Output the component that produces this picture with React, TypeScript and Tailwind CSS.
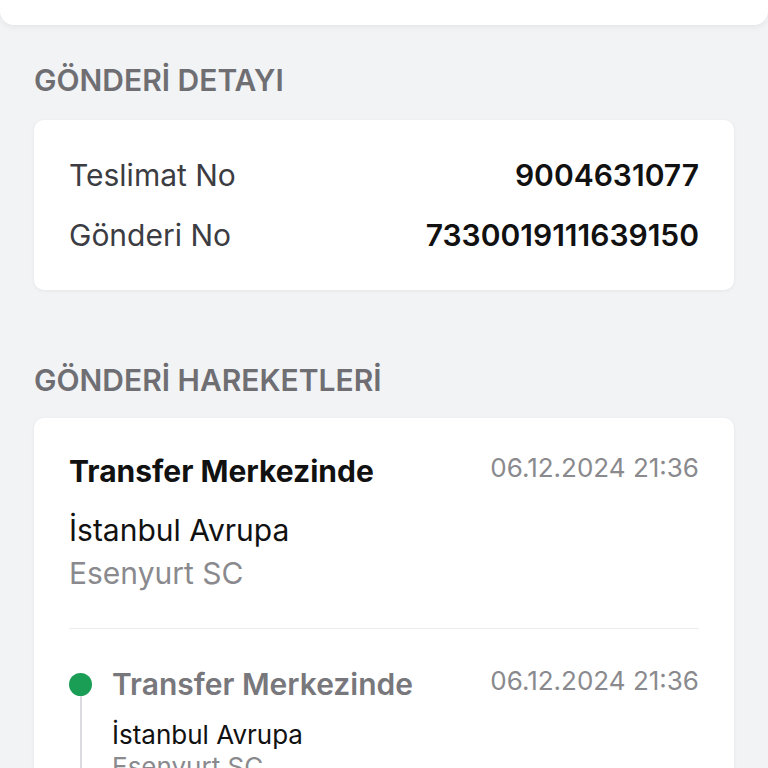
import React from 'react';

const DetailRow = ({ label, value }: { label: string; value: string }) => (
  <div className="flex items-center justify-between h-[60px]">
    <span className="text-[30px] text-[#3c3c43] leading-[36px]">{label}</span>
    <span className="text-[30px] font-semibold text-[#111] leading-[36px]">{value}</span>
  </div>
);

export default function App() {
  return (
    <div className="min-h-screen bg-[#f2f3f5] font-['Inter',sans-serif] overflow-hidden">
      {/* top card (cut off) */}
      <div className="h-[25px] bg-white rounded-b-[14px] shadow-[0_2px_6px_rgba(0,0,0,0.06)]" />

      <div className="px-[34px]">
        <h2 className="mt-[37px] text-[30px] leading-[36px] font-semibold text-[#6e6e73]">GÖNDERİ DETAYI</h2>

        <div className="mt-[22px] bg-white rounded-[10px] shadow-[0_1px_4px_rgba(0,0,0,0.06)] px-[35px] py-[25px]">
          <DetailRow label="Teslimat No" value="9004631077" />
          <DetailRow label="Gönderi No" value="7330019111639150" />
        </div>

        <h2 className="mt-[72px] text-[30px] leading-[36px] font-semibold text-[#6e6e73]">GÖNDERİ HAREKETLERİ</h2>

        <div className="mt-[20px] bg-white rounded-t-[10px] shadow-[0_1px_4px_rgba(0,0,0,0.06)] px-[35px] pt-[35px] pb-[40px]">
          {/* latest status */}
          <div className="flex items-start justify-between">
            <span className="text-[30px] leading-[36px] font-bold text-[#111]">Transfer Merkezinde</span>
            <span className="text-[26px] leading-[30px] text-[#8a8a8e]">06.12.2024 21:36</span>
          </div>
          <div className="mt-[23px] text-[30px] leading-[36px] text-[#111]">İstanbul Avrupa</div>
          <div className="mt-[7px] text-[30px] leading-[36px] text-[#8a8a8e]">Esenyurt SC</div>

          <div className="mt-[37px] border-t border-[#ececee]" />

          {/* timeline */}
          <div className="mt-[37px] flex gap-[20px]">
            <div className="flex flex-col items-center w-[23px] shrink-0">
              <div className="mt-[7px] w-[23px] h-[23px] rounded-full bg-[#1a9e55]" />
              <div className="w-[2px] h-[120px] bg-[#dcdce0]" />
            </div>
            <div className="flex-1">
              <div className="flex items-start justify-between">
                <span className="text-[30px] leading-[36px] font-semibold text-[#77777c]">Transfer Merkezinde</span>
                <span className="text-[26px] leading-[30px] text-[#8a8a8e]">06.12.2024 21:36</span>
              </div>
              <div className="mt-[17px] text-[26px] leading-[32px] text-[#111]">İstanbul Avrupa</div>
              <div className="text-[26px] leading-[32px] text-[#8a8a8e]">Esenyurt SC</div>
            </div>
          </div>
        </div>
      </div>
    </div>
  );
}
